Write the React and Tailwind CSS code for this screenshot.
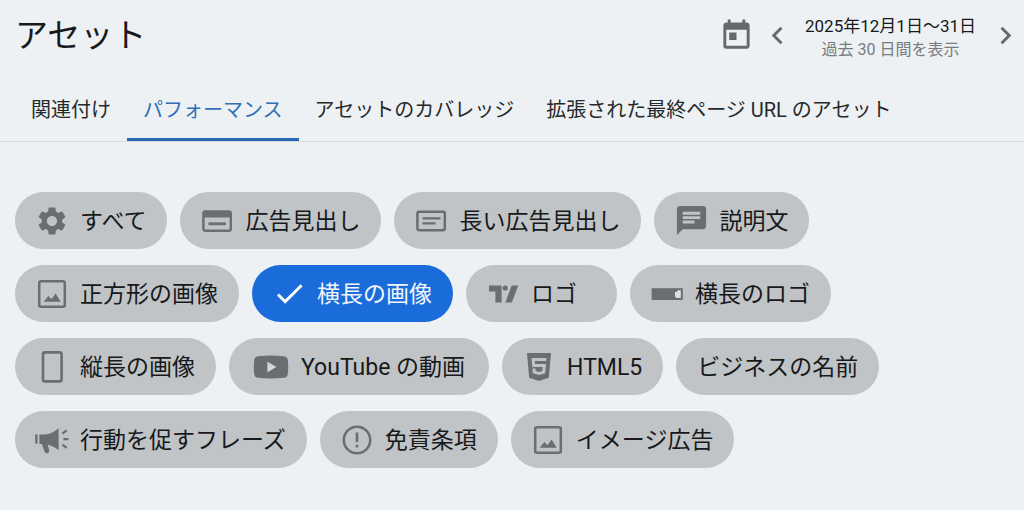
import { useState } from "react";
import { MdChat, MdCheck, MdChevronLeft, MdChevronRight, MdSettings, MdToday } from "react-icons/md";
import { FaHtml5 } from "react-icons/fa";

const HeadlineIcon = () => (
  <svg width="32" height="32" viewBox="0 0 32 32" fill="none">
    <rect x="2.4" y="6.4" width="27.4" height="19.4" rx="2" stroke="currentColor" strokeWidth="2.4" />
    <path d="M2 12.6V8a2 2 0 0 1 2-2h24a2 2 0 0 1 2 2v4.6z" fill="currentColor" />
    <path d="M7.5 18.8h17.5" stroke="currentColor" strokeWidth="2.8" />
  </svg>
);

const LongHeadlineIcon = () => (
  <svg width="32" height="32" viewBox="0 0 32 32" fill="none" stroke="currentColor">
    <rect x="2.4" y="6.8" width="27.4" height="18.4" rx="2" strokeWidth="2.5" />
    <path d="M7.5 13.4h18M7.5 18.4h13" strokeWidth="2.2" />
  </svg>
);

const ImageIcon = () => (
  <svg width="32" height="32" viewBox="0 0 32 32" fill="none">
    <rect x="3.2" y="3.2" width="25.6" height="25.6" rx="2" stroke="currentColor" strokeWidth="2.5" />
    <path d="M7.6 23.8l4.8-5.8 3 3.2 4.2-5.8 5.2 8.4z" fill="currentColor" />
  </svg>
);

const LogoIcon = () => (
  <svg width="32" height="32" viewBox="0 0 32 32" fill="currentColor">
    <path d="M2 7.4h12.6v17.2H8.4V13.6H2z" />
    <circle cx="18.2" cy="10" r="2.6" />
    <path d="M24.6 7.4h6.6l-6.4 17.2h-6.4z" />
  </svg>
);

const WideLogoIcon = () => (
  <svg width="32" height="32" viewBox="0 0 32 32" fill="none">
    <path d="M.6 10.2h31.2V22H.6z" fill="currentColor" />
    <path d="M29.8 12.2h-3l-.8 1.2-2 .8v4.2l1.6 1.6h4.2z" className="fill-[#dcdfe0]" />
  </svg>
);

const PortraitIcon = () => (
  <svg width="32" height="32" viewBox="0 0 32 32" fill="none">
    <rect x="7" y="1.4" width="18.6" height="29" rx="2" stroke="currentColor" strokeWidth="2.6" />
  </svg>
);

const YoutubeIcon = () => (
  <svg width="36" height="32" viewBox="0 0 36 32">
    <path
      d="M5 5.2Q18 3.6 31 5.2Q34.4 5.6 34.8 9Q35.6 16 34.8 23Q34.4 26.4 31 26.8Q18 28.4 5 26.8Q1.6 26.4 1.2 23Q.4 16 1.2 9Q1.6 5.6 5 5.2z"
      fill="currentColor"
    />
    <path d="M14.4 10.8v10.4l9-5.2z" className="fill-[#d5d8d9]" />
  </svg>
);

const MegaphoneIcon = () => (
  <svg width="36" height="32" viewBox="0 0 36 32" fill="none">
    <path d="M2.4 11.5v7" stroke="currentColor" strokeWidth="2.4" strokeLinecap="round" />
    <path
      d="M5.4 10.4h5.2c5 0 9.8-2.4 14-6.2v22c-3.4-2.8-6.8-4.6-10.8-5.4l1.4 5.6a2.4 2.4 0 0 1-4.6 1.3L7.8 20H5.4z"
      fill="currentColor"
    />
    <path d="M28.4 9.6l4.2-3.2M29.4 15.2h5M28.4 20.6l4.2 3.2" stroke="currentColor" strokeWidth="2.2" />
  </svg>
);

const DisclaimerIcon = () => (
  <svg width="32" height="32" viewBox="0 0 32 32" fill="none" stroke="currentColor">
    <circle cx="16" cy="16" r="13.2" strokeWidth="2.5" />
    <path d="M16 8.6v9.4M16 20.8v2.6" strokeWidth="2.6" />
  </svg>
);

const tabs = ["関連付け", "パフォーマンス", "アセットのカバレッジ", "拡張された最終ページ URL のアセット"];

const chipRows = [
  [
    { label: "すべて", icon: <MdSettings size={34} /> },
    { label: "広告見出し", icon: <HeadlineIcon /> },
    { label: "長い広告見出し", icon: <LongHeadlineIcon /> },
    { label: "説明文", icon: <MdChat size={35} /> },
  ],
  [
    { label: "正方形の画像", icon: <ImageIcon /> },
    { label: "横長の画像", icon: <ImageIcon /> },
    { label: "ロゴ", icon: <LogoIcon /> },
    { label: "横長のロゴ", icon: <WideLogoIcon /> },
  ],
  [
    { label: "縦長の画像", icon: <PortraitIcon /> },
    { label: "YouTube の動画", icon: <YoutubeIcon />, wide: true },
    { label: "HTML5", icon: <FaHtml5 size={32} /> },
    { label: "ビジネスの名前" },
  ],
  [
    { label: "行動を促すフレーズ", icon: <MegaphoneIcon /> },
    { label: "免責条項", icon: <DisclaimerIcon /> },
    { label: "イメージ広告", icon: <ImageIcon /> },
  ],
];

const Chip = ({ label, icon, wide, selected, onClick }) => (
  <button
    type="button"
    aria-pressed={selected}
    onClick={onClick}
    className={`flex h-[57px] min-w-[151px] shrink-0 cursor-pointer items-center gap-3 rounded-full text-[23px] leading-8 whitespace-nowrap ${
      wide ? "px-6" : "px-[21px]"
    } ${selected ? "bg-[#1a6cdb] text-[#f1f6fc]" : "bg-[#c0c4c6] text-[#17191b]"}`}
  >
    {icon && (
      <span
        className={`flex h-8 shrink-0 items-center justify-center [&>svg]:shrink-0 ${wide ? "w-9" : "w-8"} ${
          selected ? "text-white" : "text-[#696e71]"
        }`}
      >
        {selected ? <MdCheck size={35} /> : icon}
      </span>
    )}
    <span className="pt-0.5">{label}</span>
  </button>
);

const DateRange = () => (
  <div className="flex items-center text-[#64696c]">
    <button type="button" aria-label="カレンダー" className="mr-1.5 cursor-pointer">
      <MdToday size={35} />
    </button>
    <button type="button" aria-label="前の期間" className="mr-2.5 cursor-pointer">
      <MdChevronLeft size={35} />
    </button>
    <div className="pt-1 text-center leading-6 whitespace-nowrap">
      <p className="text-[17px] text-[#17191b]">2025年12月1日〜31日</p>
      <p className="text-[16px] text-[#777c80]">過去 30 日間を表示</p>
    </div>
    <button type="button" aria-label="次の期間" className="ml-3 cursor-pointer">
      <MdChevronRight size={35} />
    </button>
  </div>
);

export default function App() {
  const [activeTab, setActiveTab] = useState("パフォーマンス");
  const [selected, setSelected] = useState("横長の画像");

  return (
    <main className="min-h-screen bg-[#edf1f3] font-[Roboto,'Noto_Sans_CJK_JP',sans-serif] text-[#17191b]">
      <header className="flex h-[71px] items-center justify-between pr-px pl-[15px]">
        <h1 className="text-[33px] leading-10">アセット</h1>
        <DateRange />
      </header>

      <nav className="flex h-[71px] border-b border-[#d5dadd] pl-[15px]">
        {tabs.map((tab) => (
          <button
            key={tab}
            type="button"
            onClick={() => setActiveTab(tab)}
            className={`cursor-pointer border-b-3 px-4 pt-2.5 text-[20px] leading-7 whitespace-nowrap ${
              tab === activeTab ? "border-[#2a69b5] text-[#2f6fb7]" : "border-transparent text-[#26292b]"
            }`}
          >
            {tab}
          </button>
        ))}
      </nav>

      <section className="flex flex-col gap-4 px-[15px] pt-[50px] pb-10">
        {chipRows.map((row) => (
          <div key={row[0].label} className="flex flex-wrap gap-[13px]">
            {row.map((chip) => (
              <Chip
                key={chip.label}
                {...chip}
                selected={chip.label === selected}
                onClick={() => setSelected(chip.label)}
              />
            ))}
          </div>
        ))}
      </section>
    </main>
  );
}
